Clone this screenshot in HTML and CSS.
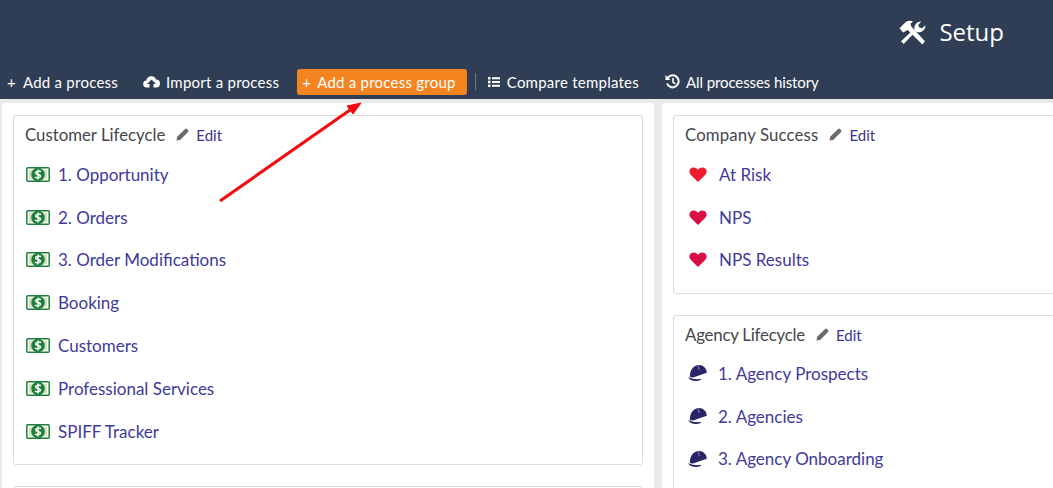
FILE: index.html
```html
<!DOCTYPE html>
<html lang="en">
<head>
<meta charset="utf-8">
<title>Setup</title>
<link rel="stylesheet" href="styles.css">
</head>
<body>
<svg width="0" height="0" class="defs">
  <symbol id="money" viewBox="0 0 24 15">
    <rect x="0.8" y="0.8" width="22.4" height="13.4" rx="1" fill="#fff" stroke="#1f7f3a" stroke-width="1.5"/>
    <rect x="3" y="3" width="18" height="9" fill="#cfe6b8"/>
    <circle cx="12" cy="7.5" r="6.8" fill="#1f7f3a"/>
    <path d="M15 4.800c-1-1-5-1.200-5.300 1 -.3 2.200 5 1.300 4.800 3.500 -.2 2-4.300 1.800-5.600.7M12 2.500v10" fill="none" stroke="#fff" stroke-width="1.500"/>
  </symbol>
  <symbol id="heart" viewBox="0 0 20 17">
    <path d="M10 17 2 9C-1 6 0 1 4.500 .5 7 .2 9 1.500 10 3.500 11 1.500 13 .2 15.500 .5 20 1 21 6 18 9Z"/>
  </symbol>
  <symbol id="helmet" viewBox="0 0 20 18">
    <path d="M2 13C1.500 6 6 .5 11.500 .5c4.500 0 8 3.200 8.300 8.300L6 13.500C5 13.800 3 13.800 2 13Z" fill="#2a2566"/>
    <path d="M10.500 1 12 6" stroke="#8f8cc0" stroke-width="1"/>
    <path d="M.3 13.300c1 2.800 4.500 4.500 9 4.200 2.500-.3 4.200-1.200 5.200-2.500-4 .8-9 .9-14.200-1.700Z" fill="#2a2566"/>
  </symbol>
  <symbol id="pencil" viewBox="0 0 14 14">
    <path d="M.5 13.500 1.200 9.500 9.800 1a1.500 1.500 0 0 1 2 0l1.200 1.200a1.500 1.500 0 0 1 0 2L4.500 12.800Z" fill="#6b6b6b"/>
  </symbol>
</svg>

<header class="topbar">
  <div class="title-row">
    <svg class="tools-icon" viewBox="0 0 26 24" aria-hidden="true">
      <path d="M.5 8 6.500 2C9 .5 11.500 .5 13.500 1.500L11 3.500 12 6.500 25 20.500 22.500 23.500 8.500 9.500 6.500 10.500 4 12Z" fill="#fff"/>
      <path d="M2 20.500 13.500 9.500 15.500 11.500 4.500 23Z" fill="#fff"/>
      <path d="M15 10C14 5.500 16.500 1.500 21.500 1.500L18.500 4.800 19.500 7.200 22.300 8 25.300 5C25.800 9.500 21.500 12.800 17 11.500Z" fill="#fff"/>
    </svg>
    <span class="title">Setup</span>
  </div>
  <nav class="toolbar">
    <a class="tool tool-first"><span class="plus">+</span>Add a process</a>
    <a class="tool tool-import">
      <svg class="tool-icon" viewBox="0 0 17 13" aria-hidden="true"><path d="M4 12.500a3.500 3.500 0 0 1-.6-7A5 5 0 0 1 13 4.500a4 4 0 0 1 0 8h-2.500V9H13L8.500 4.500 4 9h2.500v3.500Z" fill="#fff"/></svg>
      Import a process
    </a>
    <a class="tool tool-active"><span class="plus">+</span>Add a process group</a>
    <span class="divider"></span>
    <a class="tool tool-compare">
      <svg class="tool-icon list-icon" viewBox="0 0 12 10" aria-hidden="true"><path d="M0 0h2.500v2.500H0zM4 .3h8v2H4zM0 3.800h2.500v2.500H0zM4 4h8v2H4zM0 7.500h2.500V10H0zM4 7.800h8v2H4z" fill="#fff"/></svg>
      Compare templates
    </a>
    <a class="tool tool-history">
      <svg class="tool-icon history-icon" viewBox="0 0 15 15" aria-hidden="true"><path d="M3 3.500A6 6 0 1 1 2 9.500" fill="none" stroke="#fff" stroke-width="2"/><path d="M.5 1v5h5Z" fill="#fff"/><path d="M8 4v4l2.500 2" fill="none" stroke="#fff" stroke-width="1.600"/></svg>
      All processes history
    </a>
  </nav>
</header>

<main class="columns">
  <section class="panel">
    <article class="card card-customer">
      <h2 class="card-head"><span>Customer Lifecycle</span><a class="edit"><svg class="pencil"><use href="#pencil"/></svg>Edit</a></h2>
      <ul class="items">
        <li><svg class="icon money"><use href="#money"/></svg><a>1. Opportunity</a></li>
        <li><svg class="icon money"><use href="#money"/></svg><a>2. Orders</a></li>
        <li><svg class="icon money"><use href="#money"/></svg><a>3. Order Modifications</a></li>
        <li><svg class="icon money"><use href="#money"/></svg><a>Booking</a></li>
        <li><svg class="icon money"><use href="#money"/></svg><a>Customers</a></li>
        <li><svg class="icon money"><use href="#money"/></svg><a>Professional Services</a></li>
        <li><svg class="icon money"><use href="#money"/></svg><a>SPIFF Tracker</a></li>
      </ul>
    </article>
    <article class="card card-stub"></article>
  </section>
  <section class="panel panel-right">
    <article class="card card-success">
      <h2 class="card-head"><span>Company Success</span><a class="edit"><svg class="pencil"><use href="#pencil"/></svg>Edit</a></h2>
      <ul class="items">
        <li><svg class="icon heart heart-red"><use href="#heart"/></svg><a>At Risk</a></li>
        <li><svg class="icon heart"><use href="#heart"/></svg><a>NPS</a></li>
        <li><svg class="icon heart"><use href="#heart"/></svg><a>NPS Results</a></li>
      </ul>
    </article>
    <article class="card card-agency">
      <h2 class="card-head"><span>Agency Lifecycle</span><a class="edit"><svg class="pencil"><use href="#pencil"/></svg>Edit</a></h2>
      <ul class="items">
        <li><svg class="icon helmet"><use href="#helmet"/></svg><a>1. Agency Prospects</a></li>
        <li><svg class="icon helmet"><use href="#helmet"/></svg><a>2. Agencies</a></li>
        <li><svg class="icon helmet"><use href="#helmet"/></svg><a>3. Agency Onboarding</a></li>
      </ul>
    </article>
  </section>
</main>

<svg class="arrow" viewBox="0 0 1053 488" aria-hidden="true">
  <path d="M220 201 350 110" stroke="#f4090f" stroke-width="3" fill="none"/>
  <path d="M361 103 347 106 353 114Z" fill="#f4090f" stroke="#f4090f"/>
</svg>
</body>
</html>
```
FILE: styles.css
```css
* { box-sizing: border-box; }
html, body { margin: 0; height: 100%; overflow: hidden; }
body {
  position: relative;
  background: #e9e9e9;
  font-family: "Lato", "Liberation Sans", sans-serif;
  color: #3f4146;
}
.defs { position: absolute; }
.topbar {
  height: 99px;
  background: #2f3e54;
  display: flex;
  flex-direction: column;
  color: #fff;
}
.title-row {
  height: 68px;
  display: flex;
  align-items: flex-start;
  justify-content: flex-end;
  padding: 16px 49px 0 0;
}
.tools-icon { width: 27px; height: 25px; margin-top: 4px; margin-right: 13px; }
.title { font-family: "Open Sans", sans-serif; font-size: 24px; line-height: 32px; }
.toolbar {
  display: flex;
  align-items: center;
  height: 27px;
  font-size: 15px;
  letter-spacing: .24px;
}
.tool {
  display: flex;
  align-items: center;
  height: 26px;
  white-space: nowrap;
  color: #fff;
}
.tool-first { padding-left: 7px; margin-right: 25px; }
.plus { width: 16px; font-size: 15px; }
.tool-import { margin-right: 18px; }
.tool-active {
  background: #f4841f;
  border-radius: 3px;
  padding: 0 11px 0 5px;
  margin-right: 8px;
}
.tool-active .plus { width: 15px; }
.divider { width: 1px; height: 17px; background: #6e7a8a; margin-right: 12px; }
.tool-icon { width: 17px; height: 13px; margin-right: 6px; }
.list-icon { width: 12px; height: 10px; margin-right: 7px; }
.history-icon { width: 15px; height: 15px; margin-right: 6px; }
.tool-compare { margin-right: 26px; }
.tool-history { letter-spacing: -.1px; }
.columns {
  display: flex;
  gap: 8px;
  padding: 4px 0 0 2px;
  height: 389px;
  overflow: hidden;
}
.panel {
  width: 652px;
  flex: none;
  background: #fff;
  border-radius: 3px 3px 0 0;
  padding: 12px 11px 0;
  display: flex;
  flex-direction: column;
  gap: 21px;
}
.panel-right { flex: 1; width: auto; padding-right: 0; }
.card {
  flex: none;
  border: 1px solid #dcdcdc;
  border-radius: 3px;
  padding: 8px 11px 0;
}
.panel-right .card { margin-right: -6px; }
.card-customer { height: 350px; }
.card-stub { height: 40px; }
.card-success { height: 179px; }
.card-agency { height: 200px; }
.card-head {
  margin: 0;
  display: flex;
  align-items: center;
  height: 21px;
  font-weight: 400;
  font-size: 16.8px;
  color: #45464b;
}
.card-success .card-head span { letter-spacing: .15px; }
.card-agency .card-head span { letter-spacing: -.2px; }
.edit { display: flex; align-items: center; margin-left: 11px; font-size: 15px; color: #3b3591; }
.pencil { width: 13px; height: 13px; margin-right: 7px; }
.items { list-style: none; margin: 14px 0 0; padding: 0; font-size: 17px; }
.card-agency .items { margin-top: 13px; }
.items li { display: flex; align-items: center; height: 42.8px; padding-bottom: 12px; color: #403a9a; }
.icon { flex: none; }
.money { width: 24px; height: 15px; margin: 0 8px 0 1px; }
.heart { width: 18px; height: 15px; margin: 0 12px 0 4px; fill: #d90f45; }
.heart-red { fill: #ee1c2e; }
.helmet { width: 19px; height: 18px; margin: 0 11px 0 3px; }
.arrow { position: absolute; inset: 0; width: 1053px; height: 488px; pointer-events: none; }
```
